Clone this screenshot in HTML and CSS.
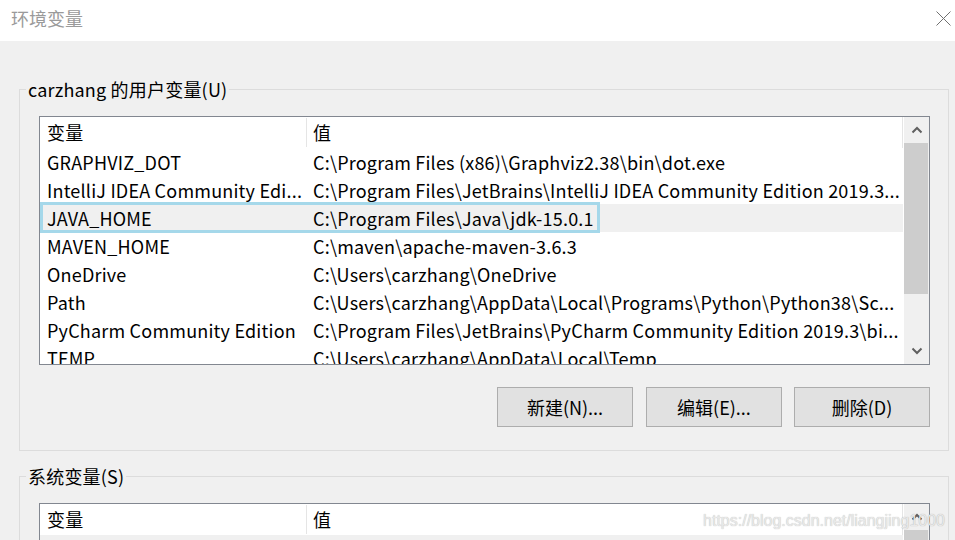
FILE: index.html
```html
<!DOCTYPE html>
<html>
<head lang="zh-CN">
    <meta charset="UTF-8">
    <title>环境变量</title>
    <link rel="stylesheet" href="styles.css">
</head>
<body>
<div class="window">
    <div class="titlebar">
        <span class="title">环境变量</span>
        <span class="close">
            <svg width="15" height="15" viewBox="0 0 15 15"><path d="M0.5 0.5L14.5 14.5M14.5 0.5L0.5 14.5" stroke="#707070" stroke-width="1" fill="none"/></svg>
        </span>
    </div>

    <div class="main">
        <!-- 用户变量 -->
        <fieldset class="group">
            <legend>carzhang 的用户变量(U)</legend>
            <div class="group-body">
                <div class="listview">
                    <div class="grid">
                        <div class="row head">
                            <div class="cell name">变量</div>
                            <div class="cell value">值</div>
                        </div>
                        <div class="row">
                            <div class="cell name">GRAPHVIZ_DOT</div>
                            <div class="cell value">C:\Program Files (x86)\Graphviz2.38\bin\dot.exe</div>
                        </div>
                        <div class="row">
                            <div class="cell name">IntelliJ IDEA Community Edi...</div>
                            <div class="cell value">C:\Program Files\JetBrains\IntelliJ IDEA Community Edition 2019.3...</div>
                        </div>
                        <div class="row selected">
                            <div class="cell name">JAVA_HOME</div>
                            <div class="cell value">C:\Program Files\Java\jdk-15.0.1</div>
                            <i class="focus"></i>
                        </div>
                        <div class="row">
                            <div class="cell name">MAVEN_HOME</div>
                            <div class="cell value">C:\maven\apache-maven-3.6.3</div>
                        </div>
                        <div class="row">
                            <div class="cell name">OneDrive</div>
                            <div class="cell value">C:\Users\carzhang\OneDrive</div>
                        </div>
                        <div class="row">
                            <div class="cell name">Path</div>
                            <div class="cell value">C:\Users\carzhang\AppData\Local\Programs\Python\Python38\Sc...</div>
                        </div>
                        <div class="row">
                            <div class="cell name">PyCharm Community Edition</div>
                            <div class="cell value">C:\Program Files\JetBrains\PyCharm Community Edition 2019.3\bi...</div>
                        </div>
                        <div class="row">
                            <div class="cell name">TEMP</div>
                            <div class="cell value">C:\Users\carzhang\AppData\Local\Temp</div>
                        </div>
                        <div class="row">
                            <div class="cell name">TMP</div>
                            <div class="cell value">C:\Users\carzhang\AppData\Local\Temp</div>
                        </div>
                    </div>
                    <div class="scrollbar">
                        <div class="sb-btn">
                            <svg width="12" height="8" viewBox="0 0 12 8"><polyline points="1.5,6.5 6,2 10.5,6.5" stroke="#606060" stroke-width="2" fill="none"/></svg>
                        </div>
                        <div class="sb-track"><div class="sb-thumb"></div></div>
                        <div class="sb-btn">
                            <svg width="12" height="8" viewBox="0 0 12 8"><polyline points="1.5,1.5 6,6 10.5,1.5" stroke="#606060" stroke-width="2" fill="none"/></svg>
                        </div>
                    </div>
                </div>
                <div class="buttons">
                    <button class="btn">新建(N)...</button>
                    <button class="btn">编辑(E)...</button>
                    <button class="btn">删除(D)</button>
                </div>
            </div>
        </fieldset>

        <!-- 系统变量 -->
        <fieldset class="group second">
            <legend>系统变量(S)</legend>
            <div class="group-body">
                <div class="listview">
                    <div class="grid">
                        <div class="row head">
                            <div class="cell name">变量</div>
                            <div class="cell value">值</div>
                        </div>
                        <div class="row inactive">
                            <div class="cell name">ComSpec</div>
                            <div class="cell value">C:\Windows\system32\cmd.exe</div>
                        </div>
                    </div>
                    <div class="scrollbar">
                        <div class="sb-btn">
                            <svg width="12" height="8" viewBox="0 0 12 8"><polyline points="1.5,6.5 6,2 10.5,6.5" stroke="#606060" stroke-width="2" fill="none"/></svg>
                        </div>
                        <div class="sb-track"><div class="sb-thumb"></div></div>
                    </div>
                </div>
            </div>
        </fieldset>
    </div>

    <div class="watermark">https://blog.csdn.net/liangjing1000</div>
</div>
</body>
</html>
```

FILE: styles.css
```css
*{
    margin: 0;
    padding: 0;
    box-sizing: border-box;
}
html,body{
    background: #f0f0f0;
    font-family: "Noto Sans CJK SC", "Noto Sans", sans-serif;
    font-size: 18px;
    color: #000;
    overflow: hidden;
}
.window{
    position: relative;
    width: 955px;
    height: 540px;
    overflow: hidden;
}

/* 标题栏 */
.titlebar{
    height: 41px;
    background: #fff;
    display: flex;
    justify-content: space-between;
    align-items: flex-start;
    padding: 0 4px 0 11px;
}
.title{
    color: #9a9a9a;
    line-height: 24px;
    margin-top: 6px;
}
.close{
    display: block;
    width: 15px;
    height: 15px;
    margin-top: 11px;
}
.close svg{
    display: block;
}

/* 分组框 */
.main{
    padding: 0 6px 0 19px;
}
.group{
    min-width: 0;
    border: 1px solid #dcdcdc;
    margin-top: 36px;
    padding: 0;
}
.group.second{
    margin-top: 13px;
}
.group legend{
    margin-left: 6px;
    padding: 0 2px;
    line-height: 24px;
    letter-spacing: 0.2px;
}
.group-body{
    padding: 15px 18px 23px 19px;
}

/* 列表 */
.listview{
    display: flex;
    height: 249px;
    border: 1px solid #828790;
    background: #fff;
}
.grid{
    flex: 1;
    min-width: 0;
    overflow: hidden;
}
.row{
    position: relative;
    display: flex;
    height: 28px;
    line-height: 28px;
    white-space: nowrap;
    letter-spacing: 0.2px;
}
.row.head{
    height: 31px;
    line-height: 31px;
    border-right: 1px solid #e5e5e5;
}
.row.head .value{
    border-left: 1px solid #e5e5e5;
    margin: 1px 0;
    line-height: 29px;
    padding-left: 6px;
}
.row.selected,
.row.inactive{
    background: #f0f0f0;
}
.cell{
    overflow: hidden;
    padding: 0 0 0 7px;
}
.cell.name{
    flex: none;
    width: 266px;
}
.cell.value{
    flex: 1;
    min-width: 0;
}
.focus{
    position: absolute;
    left: 0;
    top: -2px;
    width: 560px;
    height: 31px;
    border: 3px solid #a5d8ea;
}

/* 滚动条 */
.scrollbar{
    flex: none;
    width: 26px;
    display: flex;
    flex-direction: column;
    background: #f0f0f0;
    border-left: 1px solid #fff;
}
.sb-btn{
    height: 26px;
    display: flex;
    align-items: center;
    justify-content: center;
}
.sb-btn svg{
    display: block;
}
.sb-track{
    flex: 1;
}
.sb-thumb{
    height: 151px;
    margin-right: 1px;
    background: #cdcdcd;
}

/* 按钮 */
.buttons{
    display: flex;
    justify-content: flex-end;
    gap: 12px;
    margin-top: 22px;
}
.btn{
    width: 136px;
    height: 40px;
    background: #e1e1e1;
    border: 1px solid #adadad;
    font-family: inherit;
    font-size: 18px;
    color: #000;
}
.btn:first-child{
    margin-right: 1px;
}

/* 水印 */
.watermark{
    position: absolute;
    right: 10px;
    top: 511px;
    font-family: "Liberation Sans", Arial, sans-serif;
    font-size: 16px;
    line-height: 20px;
    color: #e9e9e9;
    text-shadow: 0 0 1px rgba(0, 0, 0, 0.3);
}
```
